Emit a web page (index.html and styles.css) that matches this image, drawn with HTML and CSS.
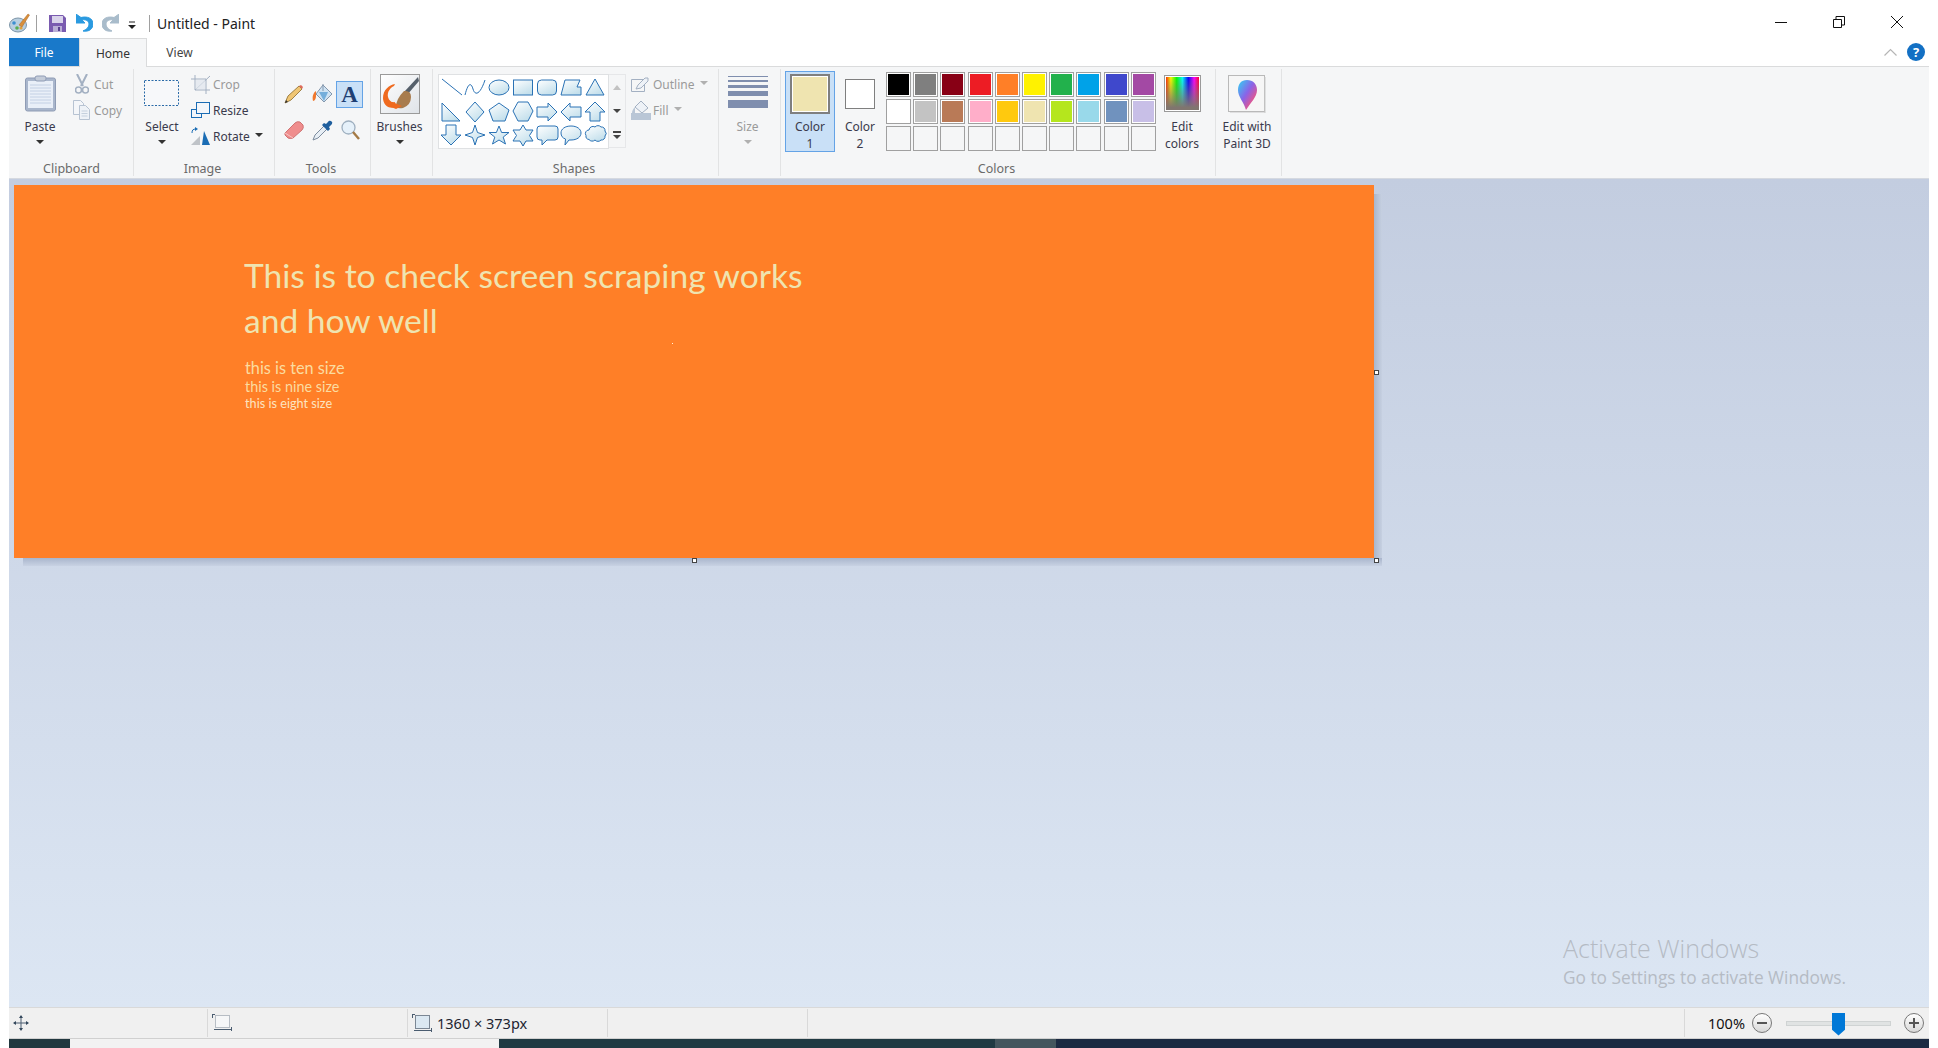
FILE: index.html
```html
<!DOCTYPE html>
<html lang="en">
<head>
    <meta charset="UTF-8">
    <title>Untitled - Paint</title>
    <link rel="stylesheet" href="styles.css">
</head>
<body>
<svg class="defs" width="0" height="0">
    <defs>
        <linearGradient id="shapeFill" x1="0" y1="0" x2="0.6" y2="1">
            <stop offset="0" stop-color="#ffffff"/>
            <stop offset="1" stop-color="#c4e0ec"/>
        </linearGradient>
        <linearGradient id="dropFill" x1="0" y1="0" x2="1" y2="1">
            <stop offset="0" stop-color="#2fd4f4"/>
            <stop offset="0.45" stop-color="#8a63e8"/>
            <stop offset="0.75" stop-color="#e4568e"/>
            <stop offset="1" stop-color="#f6a11e"/>
        </linearGradient>
        <linearGradient id="brushBg" x1="0" y1="0" x2="1" y2="1">
            <stop offset="0" stop-color="#ffffff"/>
            <stop offset="1" stop-color="#dfe3e8"/>
        </linearGradient>
    </defs>
</svg>

<div class="app">
    <!-- title bar -->
    <div class="titlebar">
        <svg class="qa-palette" width="21" height="20" viewBox="0 0 21 20">
            <ellipse cx="9" cy="12" rx="8.5" ry="7" fill="#b9cfe0" stroke="#7d95a8"/>
            <circle cx="5" cy="10" r="1.8" fill="#3c8fd0"/>
            <circle cx="8" cy="15" r="1.8" fill="#57ad52"/>
            <circle cx="12" cy="15" r="1.6" fill="#e2a13a"/>
            <path d="M10 12L19 1l1.5 1L13 14z" fill="#d98f3a" stroke="#a8682a" stroke-width=".5"/>
        </svg>
        <span class="qa-sep"></span>
        <svg class="qa-save" width="17" height="17" viewBox="0 0 17 17">
            <path d="M0 0h14l3 3v14H0z" fill="#7a5bb0"/>
            <rect x="3" y="1" width="11" height="7" fill="#d9d3ea"/>
            <rect x="4" y="11" width="9" height="6" fill="#b9aed6"/>
            <rect x="9" y="12" width="2" height="4" fill="#5a4190"/>
        </svg>
        <svg class="qa-undo" width="17" height="19" viewBox="0 0 17 19">
            <path d="M0 0v9h9L6 6c4-1 7 1 7 4 0 3-2 5-6 7 6 1 10-2 10-7 0-6-6-8-12-6.500z" fill="#2a9ae0" stroke="#2a9ae0"/>
        </svg>
        <svg class="qa-redo" width="17" height="19" viewBox="0 0 17 19">
            <path d="M17 0v9H8l3-3C7 5 4 7 4 10c0 3 2 5 6 7-6 1-10-2-10-7C0 4 6 2 12 3.500z" fill="#a9bccb" stroke="#a9bccb"/>
        </svg>
        <svg class="qa-more" width="8" height="8" viewBox="0 0 8 8">
            <path d="M1 1h6" stroke="#222" fill="none"/>
            <path d="M0 4h8L4 8z" fill="#222"/>
        </svg>
        <span class="qa-sep qa-sep-2"></span>
        <span class="title-text">Untitled - Paint</span>
        <div class="winbtns">
            <span class="winbtn">
                <svg width="12" height="12" viewBox="0 0 12 12"><path d="M0 6.500h12" stroke="#111" fill="none"/></svg>
            </span>
            <span class="winbtn">
                <svg width="12" height="12" viewBox="0 0 12 12"><path d="M.5 3.500h8v8h-8zM3 3.500V.5h8.500V9H8.500" stroke="#111" fill="none"/></svg>
            </span>
            <span class="winbtn">
                <svg width="12" height="12" viewBox="0 0 12 12"><path d="M0 0l12 12M12 0L0 12" stroke="#111" fill="none"/></svg>
            </span>
        </div>
    </div>

    <!-- tabs -->
    <div class="tabs">
        <span class="tab tab-file">File</span>
        <span class="tab tab-home">Home</span>
        <span class="tab tab-view">View</span>
        <svg class="collapse" width="13" height="8" viewBox="0 0 13 8"><path d="M.5 7.500l6-6 6 6" stroke="#b5b5b5" stroke-width="1.200" fill="none"/></svg>
        <span class="help">?</span>
    </div>

    <!-- ribbon -->
    <div class="ribbon">
        <div class="group g-clipboard">
            <div class="group-body">
                <div class="big big-paste">
                    <div class="big-icon">
                        <svg class="ic-paste" width="31" height="37" viewBox="0 0 31 37">
                            <rect x=".5" y="3" width="30" height="33" rx="2" fill="#a9b6cc" stroke="#8f9cb5"/>
                            <rect x="3" y="6" width="25" height="27" fill="#e9eff8"/>
                            <path d="M5 10h21M5 13h21M5 16h21M5 19h21M5 22h21M5 25h21M5 28h21" stroke="#c3d0e4" fill="none"/>
                            <rect x="10" y="1" width="11" height="5" rx="2" fill="#c4ccd9" stroke="#8f9cb5"/>
                        </svg>
                    </div>
                    <span class="label">Paste</span>
                    <span class="caret"></span>
                </div>
                <div class="small-col">
                    <div class="small muted">
                        <span class="small-icon">
                            <svg width="14" height="20" viewBox="0 0 14 20">
                                <path d="M2 0l6 12M12 0L6 12" stroke="#a3b0c2" stroke-width="2" fill="none"/>
                                <circle cx="3.500" cy="16" r="3" fill="none" stroke="#a3b0c2" stroke-width="1.600"/>
                                <circle cx="10.500" cy="16" r="3" fill="none" stroke="#a3b0c2" stroke-width="1.600"/>
                            </svg>
                        </span>Cut
                    </div>
                    <div class="small muted">
                        <span class="small-icon">
                            <svg width="17" height="20" viewBox="0 0 17 20">
                                <path d="M.5.5h7l3 3v11H.5z" fill="#f4f6f9" stroke="#b7c3d2"/>
                                <path d="M6.500 5.500h6l4 4v10h-10z" fill="#eef2f7" stroke="#b7c3d2"/>
                                <path d="M8.500 11h6M8.500 13.500h6M8.500 16h6" stroke="#c5d0dd" fill="none"/>
                            </svg>
                        </span>Copy
                    </div>
                </div>
            </div>
            <div class="group-label">Clipboard</div>
        </div>

        <div class="group g-image">
            <div class="group-body">
                <div class="big big-select">
                    <div class="big-icon">
                        <svg class="ic-select" width="36" height="27" viewBox="0 0 36 27">
                            <rect x=".5" y=".5" width="34" height="25" fill="#f7f8fa" stroke="#2a6aa8" stroke-dasharray="2 1.500"/>
                        </svg>
                    </div>
                    <span class="label">Select</span>
                    <span class="caret"></span>
                </div>
                <div class="small-col">
                    <div class="small muted">
                        <span class="small-icon">
                            <svg width="20" height="19" viewBox="0 0 20 19">
                                <path d="M4 0v15h15M0 4h15v15" stroke="#a3b0c2" fill="none"/>
                                <path d="M4 15L19 1" stroke="#a3b0c2" fill="none"/>
                                <rect x="5" y="5" width="9" height="9" fill="#dfe5ed" opacity=".7"/>
                            </svg>
                        </span>Crop
                    </div>
                    <div class="small">
                        <span class="small-icon">
                            <svg width="19" height="16" viewBox="0 0 19 16">
                                <rect x=".5" y="7.500" width="10" height="8" fill="#f3f6fa" stroke="#1a6cb4"/>
                                <rect x="5.500" y=".5" width="13" height="11" fill="#f3f6fa" stroke="#1a6cb4"/>
                            </svg>
                        </span>Resize
                    </div>
                    <div class="small">
                        <span class="small-icon">
                            <svg width="20" height="18" viewBox="0 0 20 18">
                                <path d="M0 18L9 9v9z" fill="#bfc3c8"/>
                                <path d="M13 4l6 14h-8z" fill="#1a6cb4"/>
                                <path d="M1 6c0-3 1-4 4-4" stroke="#1a6cb4" fill="none"/>
                                <path d="M4 0l3 2-3 2z" fill="#1a6cb4"/>
                            </svg>
                        </span>Rotate<span class="caret caret-inline"></span>
                    </div>
                </div>
            </div>
            <div class="group-label">Image</div>
        </div>

        <div class="group g-tools">
            <div class="tools-grid">
                <span class="tool">
                    <svg width="20" height="20" viewBox="0 0 20 20">
                        <path d="M1 19l3-7L15 2l3 3L7 16z" fill="#f0c674" stroke="#8a6a2a" stroke-width=".8"/>
                        <path d="M15 2l3 3 1-2-2-2z" fill="#e06a5a"/>
                        <path d="M1 19l1-3 2 2z" fill="#333"/>
                    </svg>
                </span>
                <span class="tool">
                    <svg width="21" height="22" viewBox="0 0 21 22">
                        <path d="M11 2l9 9-8 8-8-8z" fill="#cfe3f3" stroke="#8497ad"/>
                        <path d="M7 9h9l-4 9z" fill="#74aedb"/>
                        <path d="M11 1v7" stroke="#8497ad" fill="none"/>
                        <path d="M4 8C1 10 0 14 1 18c2 0 3-3 3-5z" fill="#f0782e"/>
                    </svg>
                </span>
                <span class="tool tool-on"><span class="tool-a">A</span></span>
                <span class="tool">
                    <svg width="21" height="20" viewBox="0 0 21 20">
                        <path d="M1 13L11 3q2-2 5-1l3 3q1 3-1 5L9 18q-3 1-5 0l-3-3z" fill="#ef8d8d" stroke="#cf7373"/>
                        <path d="M1 13l8 5" stroke="#f7c4c4" fill="none"/>
                    </svg>
                </span>
                <span class="tool">
                    <svg width="21" height="21" viewBox="0 0 21 21">
                        <path d="M1 20l2-5 9-9 3 3-9 9z" fill="#e7eef5" stroke="#7d8c9e"/>
                        <path d="M10 5l6 6 2-2-1-2 3-3q1-2-1-3t-3 1l-2 2-2-1z" fill="#1f5f9e"/>
                    </svg>
                </span>
                <span class="tool">
                    <svg width="19" height="20" viewBox="0 0 19 20">
                        <circle cx="7.500" cy="7.500" r="6.500" fill="#e6f1fa" stroke="#9fb0c0" stroke-width="1.300"/>
                        <path d="M12 12l6 7" stroke="#a47a45" stroke-width="2.400" fill="none"/>
                    </svg>
                </span>
            </div>
            <div class="group-label">Tools</div>
        </div>

        <div class="group g-brushes">
            <div class="group-body">
                <div class="big big-brush">
                    <div class="big-icon">
                        <svg class="ic-brush" width="40" height="40" viewBox="0 0 40 40">
                            <rect x=".5" y=".5" width="39" height="39" fill="url(#brushBg)" stroke="#9a9a9a"/>
                            <path d="M38 3L24 18l3 3L39 7z" fill="#555f6a"/>
                            <path d="M24 17q7-1 7 6 0 8-8 11-5 1-7-1 0-8 8-16z" fill="#a87c4e"/>
                            <path d="M16 33C8 36 3 30 3 24 3 16 9 11 15 10l-1 2c-4 2-7 6-6 11 1 4 4 6 7 5z" fill="#ef6a1f"/>
                            <path d="M12 28l10 4-6 3-5-2z" fill="#ef6a1f"/>
                        </svg>
                    </div>
                    <span class="label">Brushes</span>
                    <span class="caret"></span>
                </div>
            </div>
            <div class="group-label">&nbsp;</div>
        </div>

        <div class="group g-shapes">
            <div class="group-body">
                <div class="gallery">
                    <svg viewBox="0 0 24 24"><path d="M3 4l20 16"/></svg>
                    <svg viewBox="0 0 24 24"><path class="nofill" d="M2 20C5 8 8 7 10 14s7 6 12-9"/></svg>
                    <svg viewBox="0 0 24 24"><ellipse cx="12" cy="12.500" rx="10" ry="7.500"/></svg>
                    <svg viewBox="0 0 24 24"><rect x="2.500" y="5" width="19" height="15"/></svg>
                    <svg viewBox="0 0 24 24"><rect x="2.500" y="5" width="19" height="15" rx="4"/></svg>
                    <svg viewBox="0 0 24 24"><path d="M6 5h15l-3 7h4v8H2z"/></svg>
                    <svg viewBox="0 0 24 24"><path d="M12 4l9 16H3z"/></svg>
                    <svg viewBox="0 0 24 24"><path d="M3 4l18 18H3z"/></svg>
                    <svg viewBox="0 0 24 24"><path d="M12 3l9 10-9 10-9-10z"/></svg>
                    <svg viewBox="0 0 24 24"><path d="M12 4l10 7-4 11H6L2 11z"/></svg>
                    <svg viewBox="0 0 24 24"><path d="M7 3h10l5 9-5 10H7l-5-10z"/></svg>
                    <svg viewBox="0 0 24 24"><path d="M2 8h11V4l9 9-9 9v-4H2z"/></svg>
                    <svg viewBox="0 0 24 24"><path d="M22 8H11V4l-9 9 9 9v-4h11z"/></svg>
                    <svg viewBox="0 0 24 24"><path d="M12 3l10 10h-5v9H7v-9H2z"/></svg>
                    <svg viewBox="0 0 24 24"><path d="M7 2h10v10h5L12 22 2 12h5z"/></svg>
                    <svg viewBox="0 0 24 24"><path d="M12 2l2.500 7.500L22 12l-7.500 2.500L12 22l-2.500-7.500L2 12l7.500-2.500z"/></svg>
                    <svg viewBox="0 0 24 24"><path d="M12 3l2.600 6.500H22l-5.800 4.600L18.500 21 12 17l-6.500 4 2.300-6.900L2 9.500h7.400z"/></svg>
                    <svg viewBox="0 0 24 24"><path d="M12 2l3 5h7l-3.500 5.500L22 18h-7l-3 5-3-5H2l3.500-5.500L2 7h7z"/></svg>
                    <svg viewBox="0 0 24 24"><path d="M5 3h15q3 0 3 3v8q0 3-3 3H12l-5 5v-5H5q-3 0-3-3V6q0-3 3-3z"/></svg>
                    <svg viewBox="0 0 24 24"><path d="M12 3c6 0 10 3 10 7s-4 7-10 7q-1 0-2 0l-4 5 .5-6C3.500 15 2 13 2 10c0-4 4-7 10-7z"/></svg>
                    <svg viewBox="0 0 24 24"><path d="M6 7a4 4 0 0 1 6-3 4 4 0 0 1 6 0 3.500 3.500 0 0 1 4 4 3.500 3.500 0 0 1 0 5 3.500 3.500 0 0 1-4 4 4 4 0 0 1-6 0 4 4 0 0 1-6-.5 3.500 3.500 0 0 1-3-4 3.500 3.500 0 0 1 3-5.500z"/></svg>
                </div>
                <div class="gallery-scroll">
                    <span class="gs-btn"><span class="gs-up"></span></span>
                    <span class="gs-btn"><span class="gs-down"></span></span>
                    <span class="gs-btn"><span class="gs-more"></span></span>
                </div>
                <div class="small-col">
                    <div class="small muted">
                        <span class="small-icon">
                            <svg width="20" height="15" viewBox="0 0 20 15">
                                <path d="M.5 2.500h13M.5 2.500v12h13V8" stroke="#a3b0c2" fill="none"/>
                                <path d="M5 12l2-4 7-7 3 0 0 3-7 7z" fill="#eef2f7" stroke="#a3b0c2"/>
                            </svg>
                        </span>Outline<span class="caret caret-inline caret-muted"></span>
                    </div>
                    <div class="small muted">
                        <span class="small-icon">
                            <svg width="20" height="20" viewBox="0 0 20 20">
                                <path d="M10 1l7 7-6 5-7-6z" fill="#eef2f7" stroke="#a3b0c2"/>
                                <path d="M4 7C2 9 1 11 1 13h3z" fill="#b9c6d6"/>
                                <rect y="13" width="20" height="7" fill="#b9c6d6"/>
                            </svg>
                        </span>Fill<span class="caret caret-inline caret-muted"></span>
                    </div>
                </div>
            </div>
            <div class="group-label">Shapes</div>
        </div>

        <div class="group g-size">
            <div class="group-body">
                <div class="big big-size muted">
                    <div class="big-icon">
                        <div class="size-lines">
                            <span class="sl sl-1"></span>
                            <span class="sl sl-2"></span>
                            <span class="sl sl-3"></span>
                            <span class="sl sl-4"></span>
                            <span class="sl sl-5"></span>
                        </div>
                    </div>
                    <span class="label">Size</span>
                    <span class="caret caret-muted"></span>
                </div>
            </div>
            <div class="group-label">&nbsp;</div>
        </div>

        <div class="group g-colors">
            <div class="group-body">
                <div class="color-btn color-on">
                    <span class="swatch-big"></span>
                    <span class="label">Color<br>1</span>
                </div>
                <div class="color-btn">
                    <span class="swatch-small"></span>
                    <span class="label">Color<br>2</span>
                </div>
                <div class="palette">
                    <span class="pc" style="--c:#000000"></span>
                    <span class="pc" style="--c:#7f7f7f"></span>
                    <span class="pc" style="--c:#880015"></span>
                    <span class="pc" style="--c:#ed1c24"></span>
                    <span class="pc" style="--c:#ff7f27"></span>
                    <span class="pc" style="--c:#fff200"></span>
                    <span class="pc" style="--c:#22b14c"></span>
                    <span class="pc" style="--c:#00a2e8"></span>
                    <span class="pc" style="--c:#3f48cc"></span>
                    <span class="pc" style="--c:#a349a4"></span>
                    <span class="pc" style="--c:#ffffff"></span>
                    <span class="pc" style="--c:#c3c3c3"></span>
                    <span class="pc" style="--c:#b97a57"></span>
                    <span class="pc" style="--c:#ffaec9"></span>
                    <span class="pc" style="--c:#ffc90e"></span>
                    <span class="pc" style="--c:#efe4b0"></span>
                    <span class="pc" style="--c:#b5e61d"></span>
                    <span class="pc" style="--c:#99d9ea"></span>
                    <span class="pc" style="--c:#7092be"></span>
                    <span class="pc" style="--c:#c8bfe7"></span>
                    <span class="pc pc-empty"></span>
                    <span class="pc pc-empty"></span>
                    <span class="pc pc-empty"></span>
                    <span class="pc pc-empty"></span>
                    <span class="pc pc-empty"></span>
                    <span class="pc pc-empty"></span>
                    <span class="pc pc-empty"></span>
                    <span class="pc pc-empty"></span>
                    <span class="pc pc-empty"></span>
                    <span class="pc pc-empty"></span>
                </div>
                <div class="big big-edit">
                    <div class="big-icon"><span class="rainbow"></span></div>
                    <span class="label">Edit<br>colors</span>
                </div>
            </div>
            <div class="group-label">Colors</div>
        </div>

        <div class="group g-3d">
            <div class="group-body">
                <div class="big big-3d">
                    <div class="big-icon">
                        <svg class="ic-3d" width="38" height="38" viewBox="0 0 38 38">
                            <rect x=".5" y=".5" width="36" height="36" fill="#f6f6f6" stroke="#b9b9b9"/>
                            <path d="M37 2v36H2" fill="none" stroke="#c9c9c9"/>
                            <path d="M19 5c6 0 10 4 10 10 0 7-6 12-11 20-2-8-8-13-8-20C10 9 13 5 19 5z" fill="url(#dropFill)"/>
                        </svg>
                    </div>
                    <span class="label">Edit with<br>Paint 3D</span>
                </div>
            </div>
            <div class="group-label">&nbsp;</div>
        </div>
    </div>

    <!-- drawing area -->
    <div class="workspace">
        <div class="canvas">
            <p class="c-head">This is to check screen scraping works<br>and how well</p>
            <p class="c-ten">this is ten size</p>
            <p class="c-nine">this is nine size</p>
            <p class="c-eight">this is eight size</p>
            <span class="dot"></span>
            <span class="handle h-right"></span>
            <span class="handle h-bottom"></span>
            <span class="handle h-corner"></span>
        </div>
        <div class="activate">
            <div class="act-1">Activate Windows</div>
            <div class="act-2">Go to Settings to activate Windows.</div>
        </div>
    </div>

    <!-- status bar -->
    <div class="statusbar">
        <div class="st-cell">
            <svg width="16" height="16" viewBox="0 0 16 16">
                <path d="M8 1v14M1 8h14" stroke="#4a5c70" fill="none"/>
                <path d="M8 0l2 3H6zM8 16l2-3H6zM0 8l3-2v4zM16 8l-3-2v4z" fill="#33475c"/>
            </svg>
        </div>
        <div class="st-cell">
            <svg width="20" height="18" viewBox="0 0 20 18">
                <path d="M.5 0v4M0 .5h3M2 15.500h17M19.500 13v4" stroke="#4a5c70" fill="none"/>
                <rect x="3.500" y="1.500" width="14" height="12" fill="#f6f7f8" stroke="#7b8794" stroke-dasharray="1 1"/>
            </svg>
        </div>
        <div class="st-cell">
            <svg width="20" height="18" viewBox="0 0 20 18">
                <path d="M.5 0v4M0 .5h3M2 16.500h17M19.500 14v4" stroke="#4a5c70" fill="none"/>
                <rect x="3.500" y="1.500" width="14" height="13" fill="#dbe8f2" stroke="#7b8794"/>
            </svg>
            <span class="st-text">1360 × 373px</span>
        </div>
        <div class="st-cell"></div>
        <div class="st-space"></div>
        <div class="st-zoom">
            <span class="zoom-pct">100%</span>
            <span class="zoom-btn"><span class="zoom-minus"></span></span>
            <div class="slider"><span class="thumb"></span></div>
            <span class="zoom-btn"><span class="zoom-minus"></span><span class="zoom-plus"></span></span>
        </div>
    </div>

    <!-- what shows of the taskbar -->
    <div class="taskbar">
        <span class="tb tb-a"></span>
        <span class="tb tb-b"></span>
        <span class="tb tb-c"></span>
        <span class="tb tb-d"></span>
        <span class="tb-clock">12:22 PM</span>
    </div>
</div>
</body>
</html>
```

FILE: styles.css
```css
* {
    box-sizing: border-box;
}
html, body {
    margin: 0;
    height: 1048px;
    background: #fff;
    overflow: hidden;
}
body {
    font-family: "Noto Sans", "Open Sans", sans-serif;
    font-size: 12px;
    color: #3a3a4c;
}
.defs {
    position: absolute;
}
.app {
    margin: 0 9px;
    height: 1048px;
    display: flex;
    flex-direction: column;
}

/* title bar */
.titlebar {
    height: 38px;
    flex: none;
    display: flex;
    align-items: center;
    padding-top: 8px;
}
.qa-sep {
    width: 1px;
    height: 17px;
    background: #a0a0a0;
    margin-left: 6px;
}
.qa-save {
    margin-left: 12px;
}
.qa-undo {
    margin-left: 10px;
}
.qa-redo {
    margin-left: 9px;
}
.qa-more {
    margin-left: 9px;
    margin-top: 3px;
}
.qa-sep-2 {
    margin-left: 13px;
}
.title-text {
    margin-left: 7px;
    font-size: 14px;
    color: #222;
}
.winbtns {
    margin-left: auto;
    margin-right: 3px;
    display: flex;
}
.winbtn {
    width: 58px;
    display: flex;
    justify-content: center;
    margin-top: -3px;
}

/* tabs */
.tabs {
    height: 28px;
    flex: none;
    display: flex;
    align-items: center;
    position: relative;
    z-index: 1;
}
.tab {
    height: 28px;
    display: flex;
    align-items: center;
    justify-content: center;
    font-size: 12px;
}
.tab-file {
    width: 70px;
    background: #1979ca;
    color: #fff;
}
.tab-home {
    width: 68px;
    background: #f5f6f7;
    border: 1px solid #dadbdc;
    border-bottom: none;
    margin-bottom: -1px;
    height: 29px;
    color: #333;
}
.tab-view {
    width: 65px;
    color: #444;
}
.collapse {
    margin-left: auto;
    margin-right: 5px;
}
.help {
    width: 18px;
    height: 18px;
    margin-left: 5px;
    margin-right: 4px;
    border-radius: 50%;
    background: #1370c4;
    color: #fff;
    font-weight: 700;
    font-size: 13px;
    line-height: 18px;
    text-align: center;
}

/* ribbon */
.ribbon {
    height: 113px;
    flex: none;
    background: #f5f6f7;
    border-top: 1px solid #dadbdc;
    border-bottom: 1px solid #d5d9e0;
    display: flex;
}
.group {
    position: relative;
    display: flex;
    flex-direction: column;
    padding-bottom: 1px;
}
.group::after {
    content: "";
    position: absolute;
    right: 0;
    top: 2px;
    bottom: 2px;
    width: 1px;
    background: #e2e3e4;
}
.g-clipboard { width: 125px; }
.g-image { width: 141px; }
.g-tools { width: 96px; }
.g-brushes { width: 62px; }
.g-shapes { width: 286px; }
.g-size { width: 62px; }
.g-colors { width: 435px; }
.g-3d { width: 66px; }

.group-body {
    height: 93px;
    display: flex;
    align-items: flex-start;
}
.group-label {
    height: 17px;
    line-height: 17px;
    padding-right: 4px;
    text-align: center;
    font-size: 12.500px;
    color: #6a6a6a;
}
.g-clipboard .group-label {
    padding-right: 0;
}
.muted {
    color: #9a9a9a;
}

/* big buttons: icon on top, label and caret below */
.big {
    display: flex;
    flex-direction: column;
    align-items: center;
}
.big-icon {
    height: 51px;
    width: 100%;
    display: flex;
    justify-content: center;
    align-items: flex-start;
}
.label {
    line-height: 17px;
    text-align: center;
    white-space: nowrap;
}
.caret {
    width: 0;
    height: 0;
    border-left: 4px solid transparent;
    border-right: 4px solid transparent;
    border-top: 4px solid #333;
    margin-top: 5px;
}
.caret-inline {
    margin: 0 0 2px 5px;
}
.caret-muted {
    border-top-color: #b0b0b0;
}
.big-paste { width: 62px; }
.ic-paste { margin-top: 8px; }
.big-select { width: 56px; }
.ic-select { margin-top: 13px; }
.big-brush { width: 57px; }
.ic-brush { margin-top: 7px; }
.big-size { width: 57px; }
.big-edit { width: 50px; }
.big-3d { width: 62px; }
.ic-3d { margin-top: 8px; }

/* small buttons in a column */
.small-col {
    padding-top: 4px;
}
.small {
    height: 26px;
    display: flex;
    align-items: center;
    white-space: nowrap;
}
.small-icon {
    width: 21px;
    margin-right: 2px;
    display: flex;
    justify-content: center;
}

/* tools */
.tools-grid {
    height: 93px;
    padding: 9px 0 0 5px;
    display: grid;
    grid-template-columns: repeat(3, 28px);
    grid-auto-rows: 36px;
}
.tool {
    display: flex;
    align-items: center;
    justify-content: center;
}
.tool-on {
    width: 27px;
    height: 27px;
    align-self: center;
    background: #c9e0f7;
    border: 1px solid #64a3e6;
}
.tool-a {
    font-family: "Liberation Serif", serif;
    font-weight: 700;
    font-size: 23px;
    line-height: 25px;
    color: #1f3f74;
}

/* shapes gallery */
.gallery {
    margin: 7px 0 0 5px;
    width: 171px;
    height: 75px;
    background: #fff;
    border: 1px solid #dfe1e3;
    display: grid;
    grid-template-columns: repeat(7, 24px);
    grid-auto-rows: 24px;
}
.gallery svg {
    width: 24px;
    height: 24px;
    fill: url(#shapeFill);
    stroke: #2a72b5;
    stroke-width: 1;
}
.gallery .nofill {
    fill: none;
}
.gallery-scroll {
    margin: 7px 0 0 0;
    width: 17px;
    height: 74px;
    display: flex;
    flex-direction: column;
    border: 1px solid #e6e7e9;
    border-left: none;
}
.gs-btn {
    flex: 1;
    display: flex;
    align-items: center;
    justify-content: center;
}
.gs-up {
    border-left: 4px solid transparent;
    border-right: 4px solid transparent;
    border-bottom: 5px solid #c2c2c2;
}
.gs-down {
    border-left: 4px solid transparent;
    border-right: 4px solid transparent;
    border-top: 4px solid #444;
}
.gs-more {
    width: 8px;
    height: 8px;
    border-top: 2px solid #444;
    position: relative;
}
.gs-more::after {
    content: "";
    position: absolute;
    left: 0;
    top: 2px;
    border-left: 4px solid transparent;
    border-right: 4px solid transparent;
    border-top: 4px solid #444;
}
.g-shapes .small-col {
    margin-left: 4px;
}

/* size */
.size-lines {
    width: 40px;
    margin-top: 9px;
    display: flex;
    flex-direction: column;
}
.sl {
    background: #7f8eae;
    display: block;
}
.sl-1 { height: 1px; }
.sl-2 { height: 2px; margin-top: 3px; }
.sl-3 { height: 3px; margin-top: 3px; }
.sl-4 { height: 5px; margin-top: 3px; }
.sl-5 { height: 8px; margin-top: 4px; }

/* colors */
.g-colors .group-body {
    padding-left: 4px;
}
.color-btn {
    width: 50px;
    height: 81px;
    margin-top: 4px;
    display: flex;
    flex-direction: column;
    align-items: center;
    padding-top: 46px;
    position: relative;
    border: 1px solid transparent;
}
.color-on {
    background: #c9e0f7;
    border-color: #64a3e6;
}
.swatch-big {
    position: absolute;
    top: 2px;
    left: 4px;
    width: 40px;
    height: 40px;
    background: #efe4b0;
    border: 2px solid #7f7f7f;
    box-shadow: inset 0 0 0 1px #fff;
}
.swatch-small {
    position: absolute;
    top: 7px;
    left: 9px;
    width: 30px;
    height: 30px;
    background: #fff;
    border: 1px solid #7f7f7f;
}
.palette {
    width: 271px;
    margin: 5px 0 0 1px;
    display: grid;
    grid-template-columns: repeat(10, 25px);
    grid-auto-rows: 25px;
    gap: 2px 2.200px;
}
.pc {
    background: var(--c);
    border: 1px solid #a0a0a0;
    box-shadow: inset 0 0 0 1px #fff;
}
.pc-empty {
    background: transparent;
    box-shadow: none;
}
.rainbow {
    width: 37px;
    height: 37px;
    margin-top: 8px;
    border: 1px solid #9a9a9a;
    box-shadow: inset 0 0 0 1px #fff;
    background:
        linear-gradient(to bottom, rgba(128,128,128,0), #80756f 90%),
        linear-gradient(to right, #f00, #ff0, #0f0, #0ff, #00f, #f0f, #f00);
}

/* drawing area */
.workspace {
    flex: 1;
    min-height: 0;
    position: relative;
    padding: 6px 0 0 5px;
    background: linear-gradient(to bottom, #c3cde0, #dce6f3);
}
.canvas {
    width: 1360px;
    height: 373px;
    background: #ff7f27;
    position: relative;
    padding: 68px 0 0 230px;
    font-family: Lato, "Noto Sans", sans-serif;
    color: #efe4b0;
}
/* the soft shadow only starts 8px in from the corners */
.canvas::before {
    content: "";
    position: absolute;
    left: 100%;
    top: 9px;
    bottom: -8px;
    width: 8px;
    background: linear-gradient(to right, #aab6cb, #c6d0e1);
}
.canvas::after {
    content: "";
    position: absolute;
    top: 100%;
    left: 9px;
    right: -8px;
    height: 8px;
    background: linear-gradient(to bottom, #a9b5cc, #c8d2e3);
}
.canvas p {
    margin: 0 0 0 1px;
}
.canvas .c-head {
    margin-left: 0;
    font-size: 33.600px;
    line-height: 45px;
}
.canvas .c-ten {
    font-size: 16.300px;
    line-height: 21px;
    margin-top: 14px;
    color: #fbdca0;
}
.canvas .c-nine {
    font-size: 14.400px;
    line-height: 17px;
    color: #fbdca0;
}
.canvas .c-eight {
    font-size: 12.700px;
    line-height: 16px;
    color: #fde4c0;
}
.dot {
    position: absolute;
    left: 658px;
    top: 158px;
    width: 1px;
    height: 1px;
    background: #fff0d8;
}
.handle {
    position: absolute;
    z-index: 1;
    width: 5px;
    height: 5px;
    background: #fff;
    border: 1px solid #444;
}
.h-right {
    left: 100%;
    top: 185px;
}
.h-bottom {
    top: 100%;
    left: 678px;
}
.h-corner {
    top: 100%;
    left: 100%;
}
.activate {
    position: absolute;
    left: 1554px;
    top: 752px;
    font-family: "Open Sans", sans-serif;
    color: #b5bbc4;
}
.act-1 {
    font-size: 25px;
    font-weight: 300;
    line-height: 34px;
}
.act-2 {
    font-size: 17.300px;
    line-height: 24px;
    margin-top: 1px;
}

/* status bar */
.statusbar {
    height: 32px;
    flex: none;
    background: #f0f0f0;
    border-top: 1px solid #d9d9d9;
    border-bottom: 1px solid #d0d0d0;
    display: flex;
    align-items: stretch;
}
.st-cell {
    width: 200px;
    padding-left: 4px;
    border-right: 1px solid #d9d9d9;
    display: flex;
    align-items: center;
    margin: 1px 0;
}
.st-cell:first-child {
    width: 199px;
}
.st-text {
    margin-left: 5px;
    font-size: 14.500px;
    color: #1c2430;
}
.st-space {
    flex: 1;
}
.st-zoom {
    width: 245px;
    border-left: 1px solid #d9d9d9;
    margin: 1px 0;
    padding-left: 23px;
    display: flex;
    align-items: center;
}
.zoom-pct {
    width: 44px;
    font-size: 14.500px;
    color: #111;
}
.zoom-btn {
    width: 20px;
    height: 20px;
    border-radius: 50%;
    border: 1px solid #777;
    background: linear-gradient(#fff, #d8d8d8);
    position: relative;
    flex: none;
}
.zoom-minus,
.zoom-plus {
    position: absolute;
    left: 4px;
    top: 8px;
    width: 10px;
    height: 2px;
    background: #555;
}
.zoom-plus {
    transform: rotate(90deg);
}
.slider {
    width: 105px;
    height: 5px;
    margin: 0 13px 0 14px;
    background: #e0e3e3;
    border: 1px solid #cfd3d3;
    position: relative;
    flex: none;
}
.thumb {
    position: absolute;
    left: 45px;
    top: -9px;
    width: 13px;
    height: 23px;
    background: #0078d7;
    clip-path: polygon(0 0, 100% 0, 100% 75%, 50% 100%, 0 75%);
}

/* taskbar */
.taskbar {
    height: 9px;
    flex: none;
    display: flex;
    overflow: hidden;
    background: #1b2a42;
    position: relative;
}
.tb-a { width: 61px; background: #21383f; }
.tb-b { width: 429px; background: #f2f2f2; }
.tb-c { width: 496px; background: #203a43; }
.tb-d { width: 61px; background: #44565e; }
.tb-clock {
    position: absolute;
    left: 1784px;
    top: 6px;
    font-size: 12px;
    line-height: 16px;
    color: #fff;
    white-space: nowrap;
}
```
